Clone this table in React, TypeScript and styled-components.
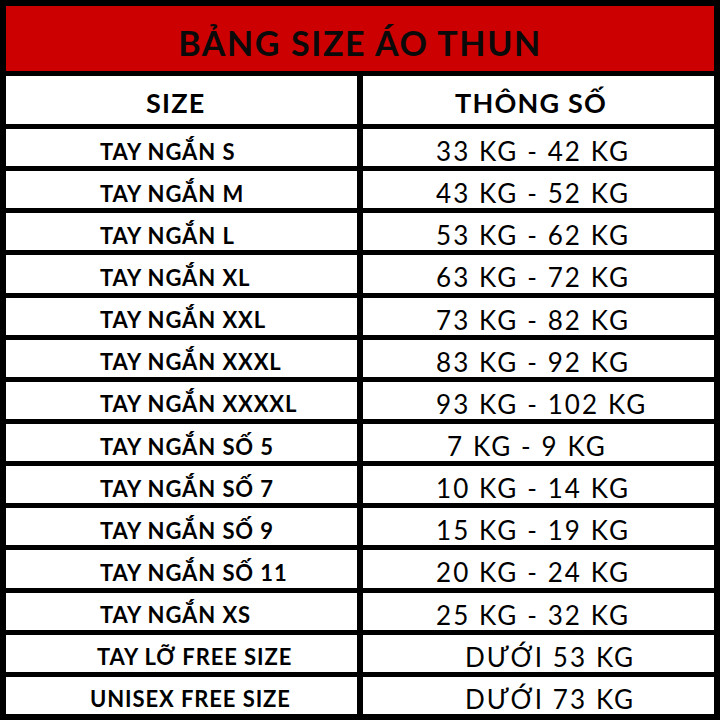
import { Fragment } from "react";
import styled, { createGlobalStyle } from "styled-components";

const GlobalStyle = createGlobalStyle`
  html, body {
    margin: 0;
    padding: 0;
    background: #000;
  }
  body {
    font-family: "Lato", "Open Sans", sans-serif;
    color: #000;
  }
`;

const Board = styled.div`
  width: 720px;
  height: 720px;
  box-sizing: border-box;
  background: #000;
  padding: 6px;
  display: grid;
  grid-template-columns: 1fr 1fr;
  grid-template-rows: 65px 48px repeat(14, minmax(0, 1fr));
  column-gap: 6px;
  row-gap: 5px;
  overflow: hidden;
`;

const Title = styled.div`
  grid-column: 1 / 3;
  background: #cc0000;
  display: flex;
  align-items: center;
  justify-content: center;
  padding-top: 8px;
  font-size: 34px;
  font-weight: 700;
  letter-spacing: 1.6px;
  color: #0a0a0a;
`;

const HeadCell = styled.div<{ $indent: number }>`
  background: #fff;
  display: flex;
  align-items: center;
  padding-left: ${(p) => p.$indent}px;
  padding-top: 4px;
  font-size: 27px;
  font-weight: 700;
  letter-spacing: 1.2px;
`;

const SizeCell = styled.div<{ $indent: number }>`
  background: #fff;
  display: flex;
  align-items: center;
  min-height: 0;
  line-height: 1;
  padding-left: ${(p) => p.$indent}px;
  padding-top: 8px;
  font-size: 22px;
  font-weight: 700;
  letter-spacing: 0.9px;
  white-space: nowrap;
`;

const ValueCell = styled.div<{ $indent: number }>`
  background: #fff;
  display: flex;
  align-items: center;
  min-height: 0;
  line-height: 1;
  padding-left: ${(p) => p.$indent}px;
  padding-top: 7px;
  font-size: 26px;
  font-weight: 400;
  letter-spacing: 2.1px;
  white-space: nowrap;
`;

type Row = { size: string; value: string; sizeIndent?: number; valueIndent?: number };

const rows: Row[] = [
  { size: "TAY NGẮN S", value: "33 KG - 42 KG" },
  { size: "TAY NGẮN M", value: "43 KG - 52 KG" },
  { size: "TAY NGẮN L", value: "53 KG - 62 KG" },
  { size: "TAY NGẮN XL", value: "63 KG - 72 KG" },
  { size: "TAY NGẮN XXL", value: "73 KG - 82 KG" },
  { size: "TAY NGẮN XXXL", value: "83 KG - 92 KG" },
  { size: "TAY NGẮN XXXXL", value: "93 KG - 102 KG" },
  { size: "TAY NGẮN SỐ 5", value: "7 KG - 9 KG", valueIndent: 84 },
  { size: "TAY NGẮN SỐ 7", value: "10 KG - 14 KG" },
  { size: "TAY NGẮN SỐ 9", value: "15 KG - 19 KG" },
  { size: "TAY NGẮN SỐ 11", value: "20 KG - 24 KG" },
  { size: "TAY NGẮN XS", value: "25 KG - 32 KG" },
  { size: "TAY LỠ FREE SIZE", value: "DƯỚI 53 KG", sizeIndent: 91, valueIndent: 102 },
  { size: "UNISEX FREE SIZE", value: "DƯỚI 73 KG", sizeIndent: 84, valueIndent: 102 },
];

export default function App() {
  return (
    <>
      <GlobalStyle />
      <Board>
        <Title>BẢNG SIZE ÁO THUN</Title>
        <HeadCell $indent={140}>SIZE</HeadCell>
        <HeadCell $indent={92}>THÔNG SỐ</HeadCell>
        {rows.map((r) => (
          <Fragment key={r.size}>
            <SizeCell $indent={r.sizeIndent ?? 94}>{r.size}</SizeCell>
            <ValueCell $indent={r.valueIndent ?? 73}>{r.value}</ValueCell>
          </Fragment>
        ))}
      </Board>
    </>
  );
}
